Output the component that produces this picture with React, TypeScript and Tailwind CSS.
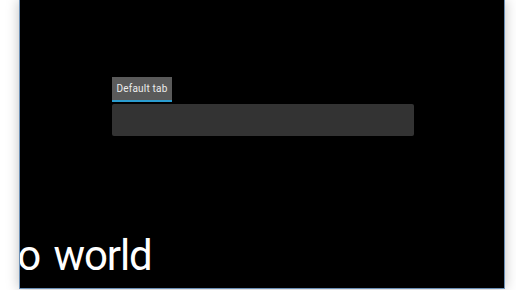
export default function App() {
  return (
    <div className="w-[516px] h-[290px] bg-white overflow-hidden">
      <div className="ml-[19px] w-[486px] h-[289px] bg-black border border-t-0 border-[#6b8fb5] shadow-[0_0_12px_rgba(0,0,0,0.25)] flex flex-col overflow-hidden">
        <div className="pt-[77px] pl-[92px] flex flex-col">
          <div className="flex">
            <div className="w-[60px] h-[25px] bg-[#5a5a5a] border-b-2 border-[#2b9ccf] flex items-center justify-center text-[10px] tracking-[0.2px] text-[#ececec] font-['Roboto',sans-serif]">
              Default tab
            </div>
          </div>
          <div className="mt-[2px] w-[302px] h-[32px] bg-[#333333] rounded-[2px]" />
        </div>
        <div className="mt-auto mb-[11px] overflow-hidden">
          <div className="-ml-[71px] text-[42px] tracking-[-1.1px] [word-spacing:4px] leading-none text-white font-['Roboto',sans-serif] whitespace-nowrap">
            Hello world
          </div>
        </div>
      </div>
    </div>
  );
}
